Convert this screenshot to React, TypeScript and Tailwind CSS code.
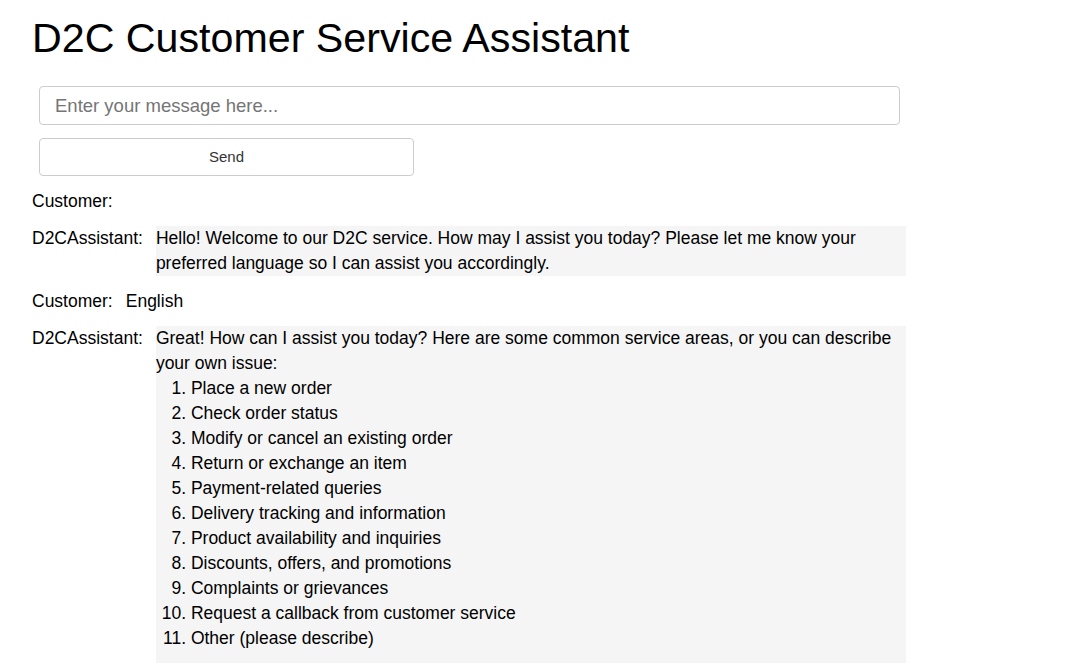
import { useState } from 'react';

type Message = {
  role: 'Customer' | 'D2CAssistant';
  text?: string;
  list?: string[];
};

const messages: Message[] = [
  { role: 'Customer' },
  {
    role: 'D2CAssistant',
    text: 'Hello! Welcome to our D2C service. How may I assist you today? Please let me know your preferred language so I can assist you accordingly.',
  },
  { role: 'Customer', text: 'English' },
  {
    role: 'D2CAssistant',
    text: 'Great! How can I assist you today? Here are some common service areas, or you can describe your own issue:',
    list: [
      'Place a new order',
      'Check order status',
      'Modify or cancel an existing order',
      'Return or exchange an item',
      'Payment-related queries',
      'Delivery tracking and information',
      'Product availability and inquiries',
      'Discounts, offers, and promotions',
      'Complaints or grievances',
      'Request a callback from customer service',
      'Other (please describe)',
    ],
  },
];

export default function App() {
  const [draft, setDraft] = useState('');

  return (
    <div className="min-h-screen bg-white px-8 pt-[15px] font-['Liberation_Sans',Arial,sans-serif] text-black">
      <h1 className="text-[41.2px] leading-[47px] font-normal">D2C Customer Service Assistant</h1>

      {/* Input form */}
      <div className="ml-[7px] mt-[24px] flex flex-col gap-[13px]">
        <input
          value={draft}
          onChange={(e) => setDraft(e.target.value)}
          placeholder="Enter your message here..."
          className="w-[861px] h-[39px] rounded-[4px] border border-[#cccccc] px-[15px] text-[18.5px] outline-none placeholder:text-[#757575]"
        />
        <button className="w-[375px] h-[38px] rounded-[4px] border border-[#cccccc] bg-white pt-[1px] text-[15px] text-[#333333]">
          Send
        </button>
      </div>

      {/* Conversation */}
      <div className="mt-[12.5px] flex flex-col gap-[12.5px] text-[17.5px] leading-[25px]">
        {messages.map((m, i) => (
          <div key={i} className="flex items-start">
            <span className="mr-[13px] shrink-0">{m.role}:</span>
            {m.role === 'D2CAssistant' ? (
              <div className={`w-[750px] bg-[#f5f5f5] ${m.list ? 'pb-[12px]' : ''}`}>
                <p>{m.text}</p>
                {m.list && (
                  <ol className="list-decimal pl-[35px]">
                    {m.list.map((item) => (
                      <li key={item}>{item}</li>
                    ))}
                  </ol>
                )}
              </div>
            ) : (
              <div>{m.text}</div>
            )}
          </div>
        ))}
      </div>
    </div>
  );
}
